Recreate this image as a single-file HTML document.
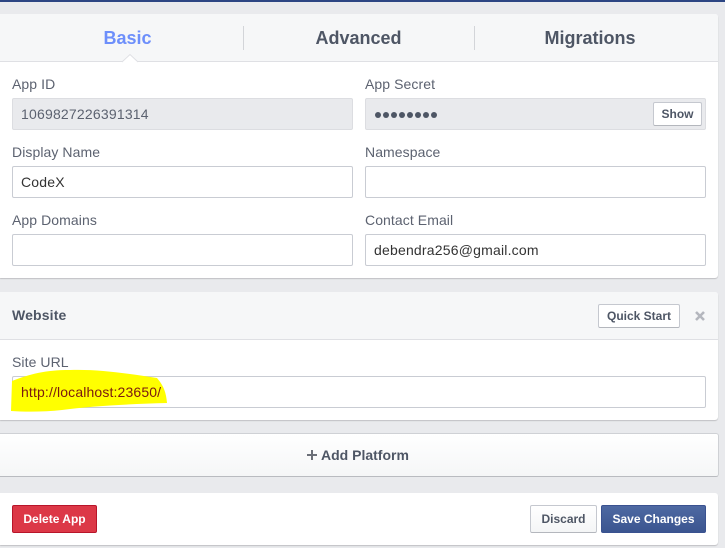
<!DOCTYPE html>
<html><head><meta charset="utf-8">
<style>
html,body{margin:0;padding:0}
body{width:725px;height:548px;overflow:hidden;background:#e9eaed;position:relative;font-family:"Liberation Sans",sans-serif;color:#4e5665}
.a{position:absolute}
.card{position:absolute;left:0;width:718px;background:#fff;border-radius:0 3px 3px 0;box-shadow:0 1px 1px rgba(0,0,0,.18)}
.head{position:absolute;left:0;background:#f6f7f8;border-bottom:1px solid #dfe0e4;width:718px;box-sizing:border-box;border-radius:0 3px 0 0}
.tab{position:absolute;top:27px;font-size:18px;line-height:22px;font-weight:bold;color:#4e5665;white-space:nowrap}
.lab{position:absolute;font-size:14px;line-height:18px;color:#5c6270;white-space:nowrap;letter-spacing:.08px}
.inp{position:absolute;width:341px;height:32px;box-sizing:border-box;background:#fff;border:1px solid #c9ccd3;border-radius:2px;font-size:14px;line-height:30px;padding-left:8px;color:#333;white-space:nowrap;letter-spacing:.2px}
.dis{background:#e9eaed;border-color:#dcdde1;color:#5c6270}
.btn{position:absolute;box-sizing:border-box;border:1px solid #c5c8cf;border-bottom-color:#b4b7bd;border-radius:2px;background:#fff;font-size:12px;font-weight:bold;text-align:center;color:#4e5665;white-space:nowrap}
</style></head><body>
<div class="a" style="left:0;top:0;width:725px;height:2px;background:#2c4583"></div>

<div class="card" style="top:14px;height:264px"></div>
<div class="head" style="top:14px;height:48px"></div>
<svg class="a" style="left:120px;top:53px" width="20" height="10"><path d="M2 9L10 1.5L18 9" fill="#fff" stroke="#dfe0e4" stroke-width="1"/><rect x="3" y="8.5" width="14" height="2" fill="#fff"/></svg>
<div class="tab" style="left:103.5px;color:#6d8ffb">Basic</div>
<div class="a" style="left:243px;top:26px;width:1px;height:24px;background:#d3d5d9"></div>
<div class="tab" style="left:315.5px">Advanced</div>
<div class="a" style="left:474px;top:26px;width:1px;height:24px;background:#d3d5d9"></div>
<div class="tab" style="left:544.5px">Migrations</div>

<div class="lab" style="left:12px;top:75px">App ID</div>
<div class="lab" style="left:365px;top:75px">App Secret</div>
<div class="inp dis" style="left:12px;top:98px">1069827226391314</div>
<div class="inp dis" style="left:365px;top:98px"></div>
<svg class="a" style="left:374px;top:110px" width="66" height="10" fill="#4e5665"><circle cx="4" cy="5" r="3"/><circle cx="12" cy="5" r="3"/><circle cx="20" cy="5" r="3"/><circle cx="28" cy="5" r="3"/><circle cx="36" cy="5" r="3"/><circle cx="44" cy="5" r="3"/><circle cx="52" cy="5" r="3"/><circle cx="60" cy="5" r="3"/></svg>
<div class="btn" style="left:653px;top:102px;width:49px;height:24px;line-height:22px">Show</div>

<div class="lab" style="left:12px;top:143px">Display Name</div>
<div class="lab" style="left:365px;top:143px">Namespace</div>
<div class="inp" style="left:12px;top:166px">CodeX</div>
<div class="inp" style="left:365px;top:166px"></div>

<div class="lab" style="left:12px;top:211px">App Domains</div>
<div class="lab" style="left:365px;top:211px">Contact Email</div>
<div class="inp" style="left:12px;top:234px"></div>
<div class="inp" style="left:365px;top:234px">debendra256@gmail.com</div>

<div class="card" style="top:292px;height:128px"></div>
<div class="head" style="top:292px;height:48px"></div>
<div class="a" style="left:12px;top:306px;font-size:14px;line-height:18px;font-weight:bold;letter-spacing:.15px">Website</div>
<div class="btn" style="left:598px;top:304px;width:82px;height:24px;line-height:22px">Quick Start</div>
<svg class="a" style="left:694px;top:310px" width="12" height="12"><path d="M2 2L10 10M10 2L2 10" stroke="#b4b7be" stroke-width="2.6"/></svg>
<div class="lab" style="left:12px;top:353px">Site URL</div>
<div class="inp" style="left:12px;top:376px;width:694px"></div>
<svg class="a" style="left:0;top:360px" width="180" height="60"><path d="M12 21C30 14 45 10 70 10C100 9 130 14 157 18C162 24 166 30 167 43C130 44 90 46 62 50C45 52 25 52 11 51Z" fill="#ffff00"/></svg>
<div class="a" style="left:21px;top:384px;font-size:14px;line-height:16px;color:#7a1a10;white-space:nowrap;letter-spacing:.14px">http://localhost:23650/</div>

<div class="a" style="left:0;top:433px;width:719px;height:44px;box-sizing:border-box;background:linear-gradient(#fff,#f5f6f7);border:1px solid #cfd1d5;border-left:0;border-bottom-color:#b9bbc0;border-radius:0 3px 3px 0"></div>
<svg class="a" style="left:306px;top:449px" width="12" height="12"><path d="M6 1V11M1 6H11" stroke="#6b6f78" stroke-width="2"/></svg>
<div class="a" style="left:321px;top:446px;font-size:14px;line-height:18px;font-weight:bold">Add Platform</div>

<div class="card" style="top:493px;height:52px"></div>
<div class="btn" style="left:12px;top:505px;width:85px;height:28px;line-height:26px;background:#dc3847;border-color:#b8152a;color:#fff">Delete App</div>
<div class="btn" style="left:530px;top:505px;width:67px;height:28px;line-height:26px;background:linear-gradient(#fff,#f4f5f6)">Discard</div>
<div class="btn" style="left:601px;top:505px;width:105px;height:28px;line-height:26px;background:linear-gradient(#4e69a2,#3b5590);border-color:#3a5290;color:#fff">Save Changes</div>
</body></html>
